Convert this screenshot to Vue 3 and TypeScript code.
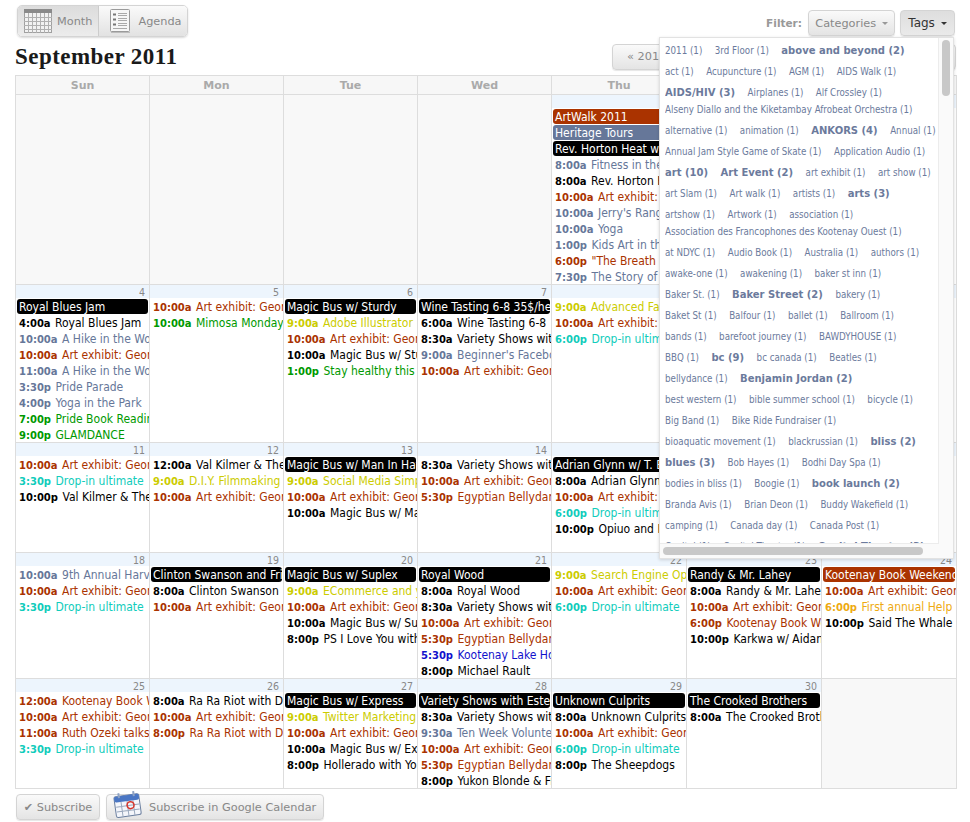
<script setup lang="ts">
type Ev = { b?: string; t?: string; n?: string; c: string }
type Day = { d?: number; empty?: boolean; ev?: Ev[] }

const ev = (t: string, n: string, c: string): Ev => ({ t, n, c })
const ban = (b: string, c = 'k'): Ev => ({ b, c })
const art = (t = '10:00a') => ev(t, 'Art exhibit: George Sawchuk', 'r')
const drop = (t: string) => ev(t, 'Drop-in ultimate', 't')

const weekdays = ['Sun', 'Mon', 'Tue', 'Wed', 'Thu', 'Fri', 'Sat']

const days: Day[] = [
  { empty: true }, { empty: true }, { empty: true }, { empty: true },
  { d: 1, ev: [
    ban('ArtWalk 2011', 'r'), ban('Heritage Tours', 's'), ban('Rev. Horton Heat w/ Guests'),
    ev('8:00a', 'Fitness in the Park', 's'), ev('8:00a', 'Rev. Horton Heat', 'k'), art(),
    ev('10:00a', "Jerry's Rangers", 's'), ev('10:00a', 'Yoga', 's'), ev('1:00p', 'Kids Art in the Park', 's'),
    ev('6:00p', '"The Breath of Life"', 'r'), ev('7:30p', 'The Story of Us', 's'),
  ] },
  { d: 2 }, { d: 3 },
  { d: 4, ev: [
    ban('Royal Blues Jam'), ev('4:00a', 'Royal Blues Jam', 'k'), ev('10:00a', 'A Hike in the Woods', 's'), art(),
    ev('11:00a', 'A Hike in the Woods', 's'), ev('3:30p', 'Pride Parade', 's'), ev('4:00p', 'Yoga in the Park', 's'),
    ev('7:00p', 'Pride Book Reading', 'g'), ev('9:00p', 'GLAMDANCE', 'g'),
  ] },
  { d: 5, ev: [art(), ev('10:00a', 'Mimosa Monday', 'g')] },
  { d: 6, ev: [
    ban('Magic Bus w/ Sturdy'), ev('9:00a', 'Adobe Illustrator', 'y'), art(),
    ev('10:00a', 'Magic Bus w/ Sturdy', 'k'), ev('1:00p', 'Stay healthy this fall', 'g'),
  ] },
  { d: 7, ev: [
    ban('Wine Tasting 6-8 35$/head'), ev('6:00a', 'Wine Tasting 6-8', 'k'), ev('8:30a', 'Variety Shows with', 'k'),
    ev('9:00a', "Beginner's Facebook", 's'), art(),
  ] },
  { d: 8, ev: [ev('9:00a', 'Advanced Facebook', 'y'), art(), drop('6:00p')] },
  { d: 9 }, { d: 10 },
  { d: 11, ev: [art(), drop('3:30p'), ev('10:00p', 'Val Kilmer & The Idiots', 'k')] },
  { d: 12, ev: [ev('12:00a', 'Val Kilmer & The Idiots', 'k'), ev('9:00a', 'D.I.Y. Filmmaking', 'y'), art()] },
  { d: 13, ev: [
    ban('Magic Bus w/ Man In Hat'), ev('9:00a', 'Social Media Simplified', 'y'), art(),
    ev('10:00a', 'Magic Bus w/ Man In Hat', 'k'),
  ] },
  { d: 14, ev: [ev('8:30a', 'Variety Shows with', 'k'), art(), ev('5:30p', 'Egyptian Bellydance', 'r')] },
  { d: 15, ev: [
    ban('Adrian Glynn w/ T. Buckley'), ev('8:00a', 'Adrian Glynn w/ T.', 'k'), art(), drop('6:00p'),
    ev('10:00p', 'Opiuo and Friends', 'k'),
  ] },
  { d: 16 }, { d: 17 },
  { d: 18, ev: [ev('10:00a', '9th Annual Harvest', 's'), art(), drop('3:30p')] },
  { d: 19, ev: [ban('Clinton Swanson and Friends'), ev('8:00a', 'Clinton Swanson', 'k'), art()] },
  { d: 20, ev: [
    ban('Magic Bus w/ Suplex'), ev('9:00a', 'ECommerce and you', 'y'), art(),
    ev('10:00a', 'Magic Bus w/ Suplex', 'k'), ev('8:00p', 'PS I Love You with', 'k'),
  ] },
  { d: 21, ev: [
    ban('Royal Wood'), ev('8:00a', 'Royal Wood', 'k'), ev('8:30a', 'Variety Shows with', 'k'), art(),
    ev('5:30p', 'Egyptian Bellydance', 'r'), ev('5:30p', 'Kootenay Lake Hospice', 'b'), ev('8:00p', 'Michael Rault', 'k'),
  ] },
  { d: 22, ev: [ev('9:00a', 'Search Engine Optimization', 'y'), art(), drop('6:00p')] },
  { d: 23, ev: [
    ban('Randy & Mr. Lahey'), ev('8:00a', 'Randy & Mr. Lahey', 'k'), art(),
    ev('6:00p', 'Kootenay Book Weekend', 'r'), ev('10:00p', 'Karkwa w/ Aidan', 'k'),
  ] },
  { d: 24, ev: [
    ban('Kootenay Book Weekend', 'r'), art(), ev('6:00p', 'First annual Help', 'o'), ev('10:00p', 'Said The Whale', 'k'),
  ] },
  { d: 25, ev: [
    ev('12:00a', 'Kootenay Book Weekend', 'r'), art(), ev('11:00a', 'Ruth Ozeki talks', 'r'), drop('3:30p'),
  ] },
  { d: 26, ev: [ev('8:00a', 'Ra Ra Riot with Dom', 'k'), art(), ev('8:00p', 'Ra Ra Riot with Dom', 'r')] },
  { d: 27, ev: [
    ban('Magic Bus w/ Express'), ev('9:00a', 'Twitter Marketing', 'y'), art(),
    ev('10:00a', 'Magic Bus w/ Express', 'k'), ev('8:00p', 'Hollerado with You', 'k'),
  ] },
  { d: 28, ev: [
    ban('Variety Shows with Esteban'), ev('8:30a', 'Variety Shows with', 'k'), ev('9:30a', 'Ten Week Volunteer', 's'), art(),
    ev('5:30p', 'Egyptian Bellydance', 'r'), ev('8:00p', 'Yukon Blonde & Friends', 'k'),
  ] },
  { d: 29, ev: [
    ban('Unknown Culprits'), ev('8:00a', 'Unknown Culprits', 'k'), art(), drop('6:00p'), ev('8:00p', 'The Sheepdogs', 'k'),
  ] },
  { d: 30, ev: [ban('The Crooked Brothers'), ev('8:00a', 'The Crooked Brothers', 'k')] },
  { empty: true },
]

// * marks the heavier tags, ^ the rows that sit closer to the one above
const tagRows: string[] = [
  '2011 (1)|3rd Floor (1)|*above and beyond (2)',
  'act (1)|Acupuncture (1)|AGM (1)|AIDS Walk (1)',
  '*AIDS/HIV (3)|Airplanes (1)|Alf Crossley (1)',
  '^Alseny Diallo and the Kiketambay Afrobeat Orchestra (1)',
  'alternative (1)|animation (1)|*ANKORS (4)|Annual (1)',
  'Annual Jam Style Game of Skate (1)|Application Audio (1)',
  '*art (10)|*Art Event (2)|art exhibit (1)|art show (1)',
  'art Slam (1)|Art walk (1)|artists (1)|*arts (3)',
  'artshow (1)|Artwork (1)|association (1)',
  '^Association des Francophones des Kootenay Ouest (1)',
  'at NDYC (1)|Audio Book (1)|Australia (1)|authors (1)',
  'awake-one (1)|awakening (1)|baker st inn (1)',
  'Baker St. (1)|*Baker Street (2)|bakery (1)',
  'Baket St (1)|Balfour (1)|ballet (1)|Ballroom (1)',
  'bands (1)|barefoot journey (1)|BAWDYHOUSE (1)',
  'BBQ (1)|*bc (9)|bc canada (1)|Beatles (1)',
  'bellydance (1)|*Benjamin Jordan (2)',
  'best western (1)|bible summer school (1)|bicycle (1)',
  'Big Band (1)|Bike Ride Fundraiser (1)',
  'bioaquatic movement (1)|blackrussian (1)|*bliss (2)',
  '*blues (3)|Bob Hayes (1)|Bodhi Day Spa (1)',
  'bodies in bliss (1)|Boogie (1)|*book launch (2)',
  'Branda Avis (1)|Brian Deon (1)|Buddy Wakefield (1)',
  'camping (1)|Canada day (1)|Canada Post (1)',
  'Capital (1)|Capitol Theatre (1)|*Capitol Theatre (3)',
]

const rows = tagRows.map((r) => ({
  tight: r.startsWith('^'),
  tags: r.replace('^', '').split('|').map((s) => ({ bold: s.startsWith('*'), text: s.replace('*', '') })),
}))
</script>

<template>
  <div class="page">
    <div class="toolbar">
      <div class="switch">
        <button class="sw active">
          <svg width="28" height="24" viewBox="0 0 28 24">
            <rect x="0.5" y="0.5" width="27" height="23" fill="#f2f2f2" stroke="#a0a0a0" />
            <rect x="0" y="0" width="28" height="4" fill="#8a8a8a" />
            <path d="M4.5 4v20M8.500 4v20M12.500 4v20M16.500 4v20M20.500 4v20M24.500 4v20M0 8.500h28M0 12.500h28M0 16.500h28M0 20.500h28" stroke="#b0b0b0" fill="none" />
          </svg>
          <span>Month</span>
        </button>
        <button class="sw">
          <svg width="21" height="24" viewBox="0 0 21 24">
            <rect x="0.500" y="0.500" width="19" height="22" rx="1" fill="#f7f7f7" stroke="#9a9a9a" />
            <path d="M1 23.500h19" stroke="#bbb" />
            <path d="M3 5.500h3M3 10.500h3M3 15.500h3" stroke="#777" stroke-width="2" />
            <path d="M8 4.500h9M8 6.500h9M8 9.500h9M8 11.500h9M8 14.500h9M8 16.500h9M3 19.500h14" stroke="#aaa" />
          </svg>
          <span>Agenda</span>
        </button>
      </div>
      <div class="filter">
        <b>Filter:</b>
        <button class="btn cat">Categories <i class="caret"></i></button>
        <button class="btn open">Tags <i class="caret"></i></button>
      </div>
    </div>

    <div class="titlebar">
      <h1>September 2011</h1>
      <nav class="pager">
        <button class="btn">« 2010</button>
        <button class="btn">‹ Aug</button>
        <button class="btn">Oct ›</button>
        <button class="btn">2012 »</button>
      </nav>
    </div>

    <div class="cal">
      <div v-for="w in weekdays" :key="w" class="head">{{ w }}</div>
      <div v-for="(day, i) in days" :key="i" class="cell" :class="{ empty: day.empty }">
        <div v-if="!day.empty" class="num">{{ day.d }}</div>
        <template v-for="(e, j) in day.ev" :key="j">
          <div v-if="e.b" class="banner" :class="'bg-' + e.c">{{ e.b }}</div>
          <div v-else class="event" :class="'fg-' + e.c"><b>{{ e.t }}</b> {{ e.n }}</div>
        </template>
      </div>
    </div>

    <div class="footer">
      <button class="btn sub">✔ Subscribe</button>
      <button class="btn gcal">
        <svg class="gicon" width="30" height="30" viewBox="0 0 30 30">
          <g transform="rotate(-8 15 15)">
            <rect x="2" y="5" width="25" height="21" rx="2" fill="#f4f6fb" stroke="#6b7f9f" />
            <rect x="2" y="5" width="25" height="6" rx="2" fill="#4a76c4" />
            <path d="M7 2v5M22 2v5" stroke="#8fa3c4" stroke-width="2" />
            <path d="M3 15.500h23M3 20.500h23M8.500 11v15M14.500 11v15M20.500 11v15" stroke="#9aa8bd" fill="none" />
            <circle cx="17.500" cy="15.500" r="3.500" fill="none" stroke="#d8352a" stroke-width="1.500" />
          </g>
        </svg>
        Subscribe in Google Calendar
      </button>
    </div>

    <div class="tags">
      <div class="tag-list">
        <div v-for="(r, i) in rows" :key="i" class="tag-row" :class="{ tight: r.tight }">
          <a v-for="t in r.tags" :key="t.text" :class="{ big: t.bold }">{{ t.text }}</a>
        </div>
      </div>
      <div class="track-v"><div class="thumb-v"></div></div>
      <div class="track-h"><div class="thumb-h"></div></div>
    </div>
  </div>
</template>

<style>
html, body { background: #fff; }
</style>

<style scoped>
.page {
  position: relative;
  width: 970px;
  height: 822px;
  overflow: hidden;
  box-sizing: border-box;
  padding: 5px 13px 0 15px;
  font-family: "DejaVu Sans Condensed", "DejaVu Sans", sans-serif;
  font-size: 12px;
}
button { font-family: "DejaVu Sans", sans-serif; }
.toolbar {
  display: flex;
  justify-content: space-between;
  height: 32px;
}
.switch {
  display: flex;
  height: 32px;
  margin-left: 2px;
  border: 1px solid #d4d4d4;
  box-sizing: border-box;
  border-radius: 5px;
  overflow: hidden;
  box-shadow: 0 1px 2px rgba(0, 0, 0, .15);
}
.sw {
  display: flex;
  align-items: center;
  gap: 5px;
  border: 0;
  padding: 0 6px;
  background: linear-gradient(#fafafa, #e2e2e2);
  color: #888;
  font-size: 11.300px;
}
.sw.active {
  background: linear-gradient(#dcdcdc, #ececec);
  border-right: 1px solid #ccc;
}
.sw + .sw { padding: 0 5px 0 11px; gap: 7px; }
.btn {
  height: 26px;
  padding: 0 6px;
  border: 1px solid #d4d4d4;
  border-radius: 4px;
  background: linear-gradient(#fafafa, #e4e4e4);
  color: #888;
  font-size: 11.300px;
  box-shadow: 0 1px 1px rgba(0, 0, 0, .1);
  white-space: nowrap;
}
.filter {
  display: flex;
  align-items: center;
  gap: 5px;
  height: 26px;
  margin-top: 5px;
  margin-right: 2px;
  color: #999;
  font-family: "DejaVu Sans", sans-serif;
  font-size: 10.500px;
}
.filter b { margin-right: 1px; }
.cat { width: 87px; }
.btn.open {
  width: 55px;
  font-size: 12px;
  background: linear-gradient(#dedede, #eaeaea);
  color: #333;
}
.caret {
  display: inline-block;
  width: 0;
  height: 0;
  margin-left: 2px;
  vertical-align: 2px;
  border: 3.500px solid transparent;
  border-top-color: #999;
  border-bottom: 0;
}
.open .caret { border-top-color: #333; }
.titlebar {
  display: flex;
  justify-content: space-between;
  align-items: center;
  height: 25px;
  margin-top: 7px;
  margin-bottom: 6px;
}
h1 {
  margin: 0;
  font-family: "Liberation Serif", serif;
  font-size: 23px;
  letter-spacing: .45px;
  font-weight: bold;
  color: #1a1a1a;
}
.pager { display: flex; gap: 4px; margin-right: 1px; }
.pager .btn { width: 83px; text-align: left; padding-left: 14px; }
.cal {
  display: grid;
  grid-template-columns: repeat(4, 134px) repeat(3, 135px);
  grid-template-rows: 19px 190px 158px 110px 126px 110px;
  border-top: 1px solid #ddd;
  border-left: 1px solid #ddd;
  width: 942px;
  box-sizing: border-box;
}
.head {
  border-right: 1px solid #ddd;
  border-bottom: 1px solid #ddd;
  background: #f7f7f7;
  color: #aaa;
  font-family: "DejaVu Sans", sans-serif;
  font-size: 11px;
  font-weight: bold;
  text-align: center;
  line-height: 19px;
}
.cell {
  border-right: 1px solid #ddd;
  border-bottom: 1px solid #ddd;
  overflow: hidden;
  min-width: 0;
}
.cell.empty { background: #f8f8f8; }
.num {
  height: 13px;
  line-height: 14px;
  margin-bottom: 1px;
  padding-right: 4px;
  text-align: right;
  background: #edf5fd;
  color: #888;
  font-size: 10.500px;
}
.event, .banner {
  height: 16px;
  line-height: 16px;
  white-space: nowrap;
  overflow: hidden;
}
.event { padding-left: 3px; }
.event b {
  margin-right: 1px;
  font-family: "DejaVu Sans", sans-serif;
  font-size: 10px;
}
.banner {
  margin: 0 1px 1px 1px;
  padding-left: 2px;
  height: 15px;
  border-radius: 3px;
  color: #fff;
}
.bg-k { background: #000; }
.bg-r { background: #aa3300; }
.bg-s { background: #667799; }
.fg-k { color: #000; }
.fg-r { color: #aa3300; }
.fg-s { color: #667799; }
.fg-g { color: #009900; }
.fg-y { color: #cccc00; }
.fg-t { color: #11ccbb; }
.fg-b { color: #1111cc; }
.fg-o { color: #eeaa11; }
.footer {
  display: flex;
  gap: 6px;
  margin-top: 5px;
  margin-left: 1px;
}
.sub { width: 84px; padding: 0; }
.gcal {
  position: relative;
  width: 218px;
  padding: 0 0 0 42px;
  text-align: left;
}
.gicon { position: absolute; left: 6px; top: -5px; }
.tags {
  position: absolute;
  left: 659px;
  top: 37px;
  width: 295px;
  height: 522px;
  box-sizing: border-box;
  background: #fff;
  border: 1px solid #e2e2e2;
  box-shadow: 0 1px 3px rgba(0, 0, 0, .15);
  overflow: hidden;
}
.tag-list {
  position: absolute;
  left: 5px;
  top: 2px;
  right: 14px;
  bottom: 14px;
  overflow: hidden;
}
.tag-row {
  display: flex;
  gap: 12.500px;
  align-items: center;
  height: 21px;
  white-space: nowrap;
  color: #6b7a9c;
  font-size: 9.700px;
}
.tag-row.tight { margin-top: -4px; }
.big {
  font-family: "DejaVu Sans", sans-serif;
  font-size: 10px;
  font-weight: bold;
}
.track-v {
  position: absolute;
  right: 0;
  top: 0;
  bottom: 0;
  width: 14px;
  background: #fafafa;
  border-left: 1px solid #ececec;
}
.thumb-v {
  margin: 2px 3px;
  height: 56px;
  background: #c8c8c8;
  border-radius: 4px;
}
.track-h {
  position: absolute;
  left: 0;
  right: 14px;
  bottom: 0;
  height: 14px;
  background: #fafafa;
  border-top: 1px solid #ececec;
}
.thumb-h {
  margin: 3px 0 0 3px;
  width: 260px;
  height: 8px;
  background: #c8c8c8;
  border-radius: 4px;
}
</style>
